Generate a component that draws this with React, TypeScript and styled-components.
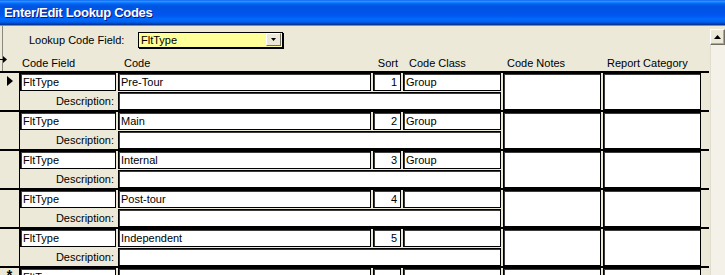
import React from 'react';
import styled, { createGlobalStyle } from 'styled-components';

const Global = createGlobalStyle`
  html, body { margin: 0; padding: 0; background: #ECE9D8; }
  body { font-family: "Liberation Sans", Arial, sans-serif; font-size: 11px; color: #000; }
  #root { width: 725px; height: 275px; overflow: hidden; }
`;

const Window = styled.div`
  width: 725px;
  height: 275px;
  display: flex;
  flex-direction: column;
  background: #ECE9D8;
  overflow: hidden;
`;

const TitleBar = styled.div`
  flex: 0 0 26px;
  box-sizing: border-box;
  display: flex;
  align-items: center;
  padding: 0 0 1px 4px;
  border-bottom: 1px solid #8f8c7e;
  background: linear-gradient(
    to bottom,
    #0058ee 0%,
    #3593ff 4%,
    #288eff 7%,
    #127dff 10%,
    #036ffc 13%,
    #0262ee 17%,
    #0057e5 23%,
    #0054e3 28%,
    #0055eb 56%,
    #005bf5 66%,
    #026afe 76%,
    #0062ef 86%,
    #0052d6 92%,
    #0040ab 95%,
    #003092 100%
  );
  color: #fff;
  font-weight: bold;
  font-size: 13px;
  letter-spacing: -0.3px;
  text-shadow: 1px 1px 0 #0a1883;
`;

const Body = styled.div`
  flex: 1;
  display: flex;
  gap: 1px;
  overflow: hidden;
`;

const Form = styled.div`
  position: relative;
  flex: 0 0 709px;
  display: flex;
  flex-direction: column;
  overflow: hidden;
`;

const FormHeader = styled.div`
  flex: 0 0 47px;
  box-sizing: border-box;
  border-bottom: 2px solid #000;
  display: flex;
  flex-direction: column;
  background: linear-gradient(to right, transparent 2px, #8a887c 2px, #8a887c 3px, transparent 3px);
`;

const LookupRow = styled.div`
  display: flex;
  align-items: center;
  margin-top: 5px;
  padding-left: 29px;
  height: 17px;
`;

const LookupLabel = styled.span`
  width: 109px;
`;

const Combo = styled.div`
  width: 145px;
  height: 16px;
  box-sizing: border-box;
  border: 1px solid #000;
  box-shadow: 1px 1px 0 #000;
  background: #ffff99;
  display: flex;
  align-items: center;
  padding-left: 2px;
`;

const ComboText = styled.span`
  flex: 1;
`;

const ComboButton = styled.div`
  width: 15px;
  height: 13px;
  margin-right: 1px;
  box-sizing: border-box;
  background: #ece9d8;
  border-top: 1px solid #fff;
  border-left: 1px solid #fff;
  border-right: 1px solid #716f64;
  border-bottom: 1px solid #716f64;
  display: flex;
  align-items: center;
  justify-content: center;
`;

const HeaderGrid = styled.div`
  display: grid;
  grid-template-columns: 96px 253px 28px 98px 98px 98px;
  column-gap: 2px;
  margin-top: 9px;
  margin-left: 21px;
  height: 12px;
  line-height: 12px;
`;

const ColLabel = styled.span<{ $pad?: number; $right?: boolean }>`
  padding-left: ${(p) => (p.$right ? 0 : p.$pad ?? 0)}px;
  padding-right: ${(p) => (p.$right ? p.$pad ?? 0 : 0)}px;
  text-align: ${(p) => (p.$right ? 'right' : 'left')};
  white-space: nowrap;
`;

const Detail = styled.div`
  flex: 1;
  overflow: hidden;
`;

const Record = styled.div`
  height: 39px;
  box-sizing: border-box;
  border-bottom: 2px solid #000;
  display: flex;
`;

const Selector = styled.div`
  flex: 0 0 20px;
  border-right: 1px solid #000;
  display: flex;
  justify-content: center;
  padding-top: 1px;
  box-sizing: border-box;
`;

const Star = styled.span`
  font-size: 14px;
  line-height: 12px;
  font-weight: bold;
`;

const Fields = styled.div`
  display: grid;
  grid-template-columns: 96px 253px 28px 98px 98px 98px;
  grid-template-rows: 18px 18px;
  column-gap: 2px;
  row-gap: 1px;
`;

const Box = styled.div<{ $right?: boolean; $col?: string; $row?: string }>`
  box-sizing: border-box;
  border: 1px solid #000;
  box-shadow: inset 1px 1px 0 #3c3c3c;
  background: #fff;
  line-height: 16px;
  padding: 0 ${(p) => (p.$right ? 3 : 1)}px 0 2px;
  text-align: ${(p) => (p.$right ? 'right' : 'left')};
  white-space: nowrap;
  overflow: hidden;
  grid-column: ${(p) => p.$col ?? 'auto'};
  grid-row: ${(p) => p.$row ?? 'auto'};
`;

const DescLabel = styled.div`
  grid-column: 1;
  grid-row: 2;
  text-align: right;
  padding-right: 2px;
  line-height: 18px;
`;

const ScrollBar = styled.div`
  flex: 0 0 15px;
  margin-top: 3px;
  display: flex;
  flex-direction: column;
`;

const ScrollButton = styled.div`
  flex: 0 0 16px;
  box-sizing: border-box;
  background: #ece9d8;
  border-top: 1px solid #fff;
  border-left: 1px solid #fff;
  border-right: 1px solid #716f64;
  border-bottom: 1px solid #716f64;
  box-shadow: inset -1px -1px 0 #aca899;
  display: flex;
  align-items: center;
  justify-content: center;
`;

const ScrollTrack = styled.div`
  flex: 1;
  background: #f3f1e8;
  border-left: 1px solid #e0ddcf;
`;

const HeaderMarker = styled.svg`
  position: absolute;
  left: 0;
  top: 30px;
`;

type Rec = { code: string; sort: string; cls: string };

const records: Rec[] = [
  { code: 'Pre-Tour', sort: '1', cls: 'Group' },
  { code: 'Main', sort: '2', cls: 'Group' },
  { code: 'Internal', sort: '3', cls: 'Group' },
  { code: 'Post-tour', sort: '4', cls: '' },
  { code: 'Independent', sort: '5', cls: '' },
];

function RecordRow({ rec, current, isNew }: { rec: Rec; current?: boolean; isNew?: boolean }) {
  return (
    <Record>
      <Selector>
        {current && (
          <svg width="6" height="10" viewBox="0 0 6 10" style={{ marginTop: 2 }}>
            <polygon points="0,0 6,5 0,10" fill="#000" />
          </svg>
        )}
        {isNew && <Star>*</Star>}
      </Selector>
      <Fields>
        <Box>FltType</Box>
        <Box>{rec.code}</Box>
        <Box $right>{rec.sort}</Box>
        <Box>{rec.cls}</Box>
        <Box $col="5" $row="1 / span 2" />
        <Box $col="6" $row="1 / span 2" />
        <DescLabel>Description:</DescLabel>
        <Box $col="2 / span 3" $row="2" />
      </Fields>
    </Record>
  );
}

export default function App() {
  return (
    <Window>
      <Global />
      <TitleBar>Enter/Edit Lookup Codes</TitleBar>
      <Body>
        <Form>
          <FormHeader>
            <LookupRow>
              <LookupLabel>Lookup Code Field:</LookupLabel>
              <Combo>
                <ComboText>FltType</ComboText>
                <ComboButton>
                  <svg width="5" height="3" viewBox="0 0 5 3">
                    <polygon points="0,0 5,0 2.5,3" fill="#000" />
                  </svg>
                </ComboButton>
              </Combo>
            </LookupRow>
            <HeaderGrid>
              <ColLabel $pad={1}>Code Field</ColLabel>
              <ColLabel $pad={5}>Code</ColLabel>
              <ColLabel $right $pad={4}>Sort</ColLabel>
              <ColLabel $pad={5}>Code Class</ColLabel>
              <ColLabel $pad={3}>Code Notes</ColLabel>
              <ColLabel $pad={3}>Report Category</ColLabel>
            </HeaderGrid>
          </FormHeader>
          <HeaderMarker width="7" height="7" viewBox="0 0 7 7">
            <rect x="0" y="3" width="4" height="1" fill="#000" />
            <polygon points="3,0 7,3.5 3,7" fill="#000" />
          </HeaderMarker>
          <Detail>
            {records.map((r, i) => (
              <RecordRow key={i} rec={r} current={i === 0} />
            ))}
            <RecordRow rec={{ code: '', sort: '', cls: '' }} isNew />
          </Detail>
        </Form>
        <ScrollBar>
          <ScrollButton>
            <svg width="7" height="4" viewBox="0 0 7 4">
              <polygon points="0,4 7,4 3.5,0" fill="#000" />
            </svg>
          </ScrollButton>
          <ScrollTrack />
        </ScrollBar>
      </Body>
    </Window>
  );
}
